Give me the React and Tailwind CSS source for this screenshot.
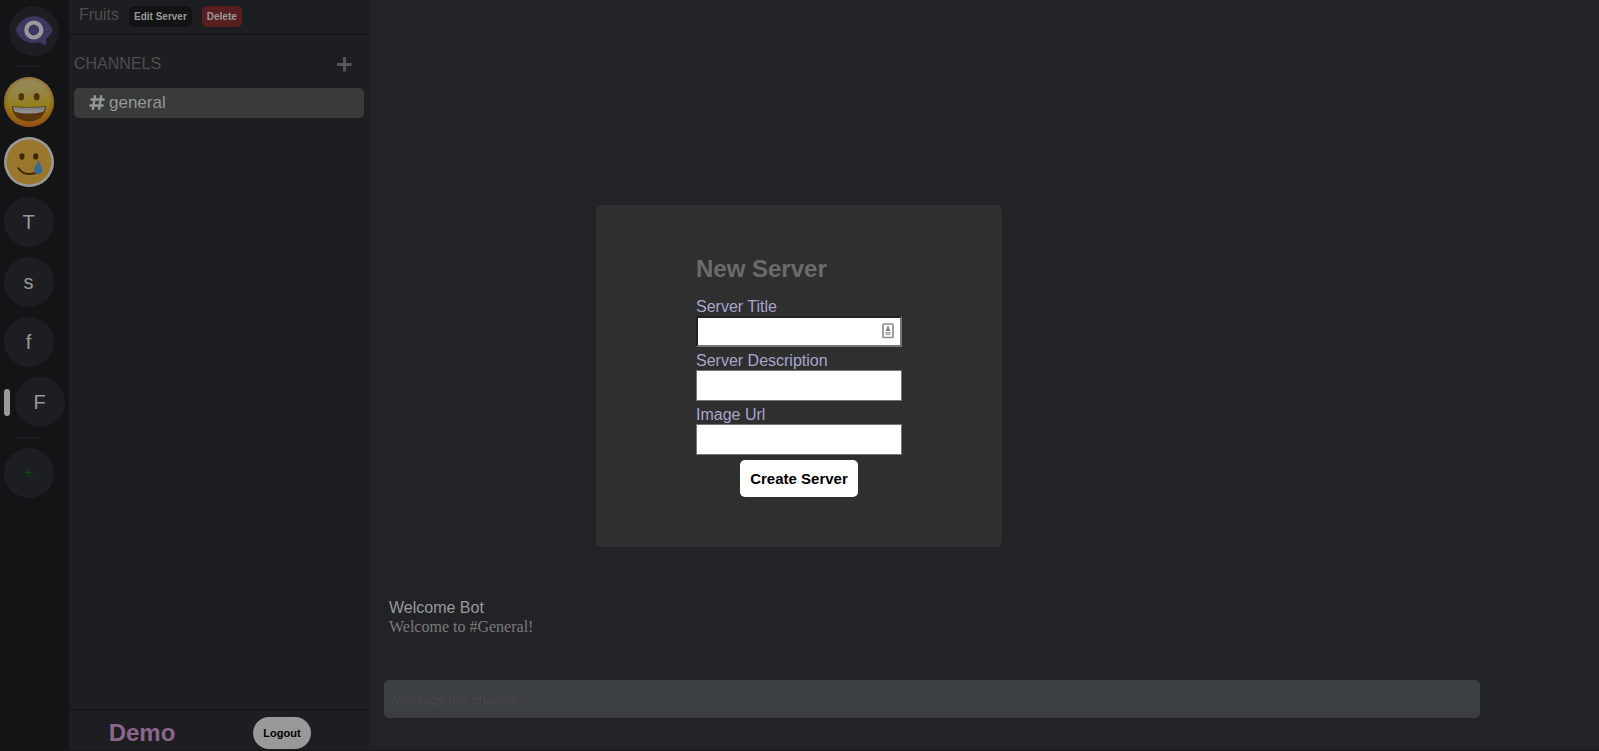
import React from "react";

const serverLink =
  "flex size-[50px] shrink-0 items-center justify-center rounded-full bg-[#1d1e21] pr-px text-xl leading-6 text-[#999999]";

function Divider() {
  return <div className="ml-3.5 h-px w-[30px] shrink-0 bg-[#1d1e21]" />;
}

function Logo() {
  return (
    <svg viewBox="0 0 50 50" className="size-full" aria-hidden="true">
      <path
        d="M6.700 24 C9.500 16 16 10.200 25 10.200 C34 10.200 40.500 16 43.800 24 C42.500 27.500 40 30.500 37 32.700 V39.500 L30.500 36.300 C20 38.800 9.500 33.500 6.700 24Z"
        fill="#3e3660"
      />
      <circle cx="24.800" cy="24" r="7.500" fill="none" stroke="#999999" strokeWidth="4.200" />
    </svg>
  );
}

function Grin() {
  return (
    <svg viewBox="0 0 50 50" className="size-full" aria-hidden="true">
      <defs>
        <linearGradient id="face" x1="0" y1="0" x2="0" y2="1">
          <stop offset="0" stopColor="#958a5c" />
          <stop offset="0.300" stopColor="#938647" />
          <stop offset="0.600" stopColor="#948018" />
          <stop offset="1" stopColor="#965a12" />
        </linearGradient>
        <radialGradient id="rim" cx="0.5" cy="0.47" r="0.53">
          <stop offset="0.740" stopColor="#945210" stopOpacity="0" />
          <stop offset="0.920" stopColor="#945210" stopOpacity="0.500" />
          <stop offset="1" stopColor="#914910" />
        </radialGradient>
        <linearGradient id="teeth" x1="0" y1="0" x2="0" y2="1">
          <stop offset="0" stopColor="#77797a" />
          <stop offset="1" stopColor="#989898" />
        </linearGradient>
      </defs>
      <circle cx="25" cy="25" r="25" fill="url(#face)" />
      <circle cx="25" cy="25" r="25" fill="url(#rim)" />
      <ellipse cx="17.300" cy="19.700" rx="2.900" ry="3.800" fill="#58320f" />
      <ellipse cx="32.700" cy="19.700" rx="2.900" ry="3.800" fill="#58320f" />
      <path d="M8 29 Q25 31 42 29 C42 38 35 44.500 25 44.500 C15 44.500 8 38 8 29Z" fill="#5b3510" />
      <path d="M9 29.700 Q25 31.500 41 29.700 Q41 33.500 38.500 35 Q25 38 11.500 35 Q9 33.500 9 29.700Z" fill="url(#teeth)" />
    </svg>
  );
}

function Tear() {
  return (
    <svg viewBox="0 0 50 50" className="size-full" aria-hidden="true">
      <circle cx="25" cy="25" r="25" fill="#999999" />
      <circle cx="25" cy="25" r="22.500" fill="#99782d" />
      <ellipse cx="18" cy="19.500" rx="2.500" ry="3.200" fill="#3d2a05" />
      <ellipse cx="31.700" cy="19.500" rx="2.500" ry="3.200" fill="#3d2a05" />
      <path d="M14.500 31.300 Q18 37 25 37 Q28.500 37 31.500 36" fill="none" stroke="#3d2a05" strokeWidth="2" strokeLinecap="round" />
      <path d="M34.300 22.500 C35.500 27 38.500 29.500 38.500 33 A4.200 4.200 0 0 1 30 33 C30 29.500 33.300 27 34.300 22.500Z" fill="#386c96" />
    </svg>
  );
}

function Plus() {
  return (
    <svg viewBox="0 0 18 18" className="size-[18px]" aria-hidden="true">
      <path d="M2 9.500H16.500M9.500 2V16.500" fill="none" stroke="currentColor" strokeWidth="2.900" />
    </svg>
  );
}

function Hash() {
  return (
    <svg viewBox="0 0 16 16" className="size-4" aria-hidden="true">
      <path
        d="M6 0.300 L3.800 14.700 M12.200 0.300 L10 14.700 M1.500 4.500 H15.500 M0.500 10.500 H14.500"
        fill="none"
        stroke="currentColor"
        strokeWidth="2.400"
      />
    </svg>
  );
}

function Rail() {
  return (
    <nav aria-label="Servers" className="flex w-[69px] shrink-0 flex-col gap-2.5 bg-[#131416] pt-1.5">
      <a href="#home" aria-label="Home" className="ml-[9px] block size-[50px] shrink-0 rounded-full bg-[#1d1e21]">
        <Logo />
      </a>
      <Divider />
      <a href="#grin" aria-label="Grin" className="ml-1 block size-[50px] shrink-0">
        <Grin />
      </a>
      <a href="#tear" aria-label="Tear" className="ml-1 block size-[50px] shrink-0">
        <Tear />
      </a>
      {["T", "s", "f"].map((name) => (
        <a key={name} href={"#" + name} className={serverLink + " ml-1"}>
          {name}
        </a>
      ))}
      <div className="ml-1 flex items-center gap-[5px]">
        <span className="h-[27px] w-1.5 rounded-full bg-[#999999]" />
        <a href="#F" aria-current="page" className={serverLink}>
          F
        </a>
      </div>
      <Divider />
      <button
        type="button"
        className="ml-1 flex size-[50px] shrink-0 items-center justify-center rounded-full bg-[#1d1e21] text-base leading-[18px] text-[#004d00]"
      >
        +
      </button>
    </nav>
  );
}

function Sidebar() {
  return (
    <aside className="flex w-[300px] shrink-0 flex-col bg-[#1d1e21]">
      <header className="flex h-[35px] items-start gap-2.5 border-b border-[#131416] pt-1.5 pl-2.5">
        <h1 className="text-base leading-[18px] text-[#4d4d4d]">Fruits</h1>
        <button type="button" className="h-[21px] rounded-[5px] bg-[#121314] px-[5px] text-[10px] font-bold leading-3 text-[#999999]">
          Edit Server
        </button>
        <button type="button" className="h-[21px] rounded-[5px] bg-[#571f1f] px-[5px] text-[10px] font-bold leading-3 text-[#999999]">
          Delete
        </button>
      </header>
      <div className="flex items-center justify-between pt-5 pr-4 pl-[5px]">
        <h2 className="text-base leading-[18px] text-[#4d4d4d]">CHANNELS</h2>
        <button type="button" aria-label="Add channel" className="text-[#575757]">
          <Plus />
        </button>
      </div>
      <a
        href="#general"
        className="mx-[5px] mt-[15px] flex h-[30px] items-center gap-1 rounded-[5px] bg-[#3a3a3a] pl-[15px] text-[17px] leading-5 text-[#929992]"
      >
        <Hash />
        general
      </a>
      <footer className="mt-auto grid h-[41px] grid-cols-2 items-center border-t border-[#131416] pt-[5px]">
        <div className="pr-1 text-center text-2xl font-bold leading-7 text-[#8b668b]">Demo</div>
        <div className="flex justify-center pr-6">
          <button type="button" className="h-8 rounded-full bg-[#999999] px-2.5 text-[11px] font-bold leading-3 text-black">
            Logout
          </button>
        </div>
      </footer>
    </aside>
  );
}

function Chat() {
  return (
    <main className="flex min-w-0 flex-1 flex-col justify-end bg-[#222327] pr-[119px] pb-8 pl-[15px]">
      <article className="mb-11 pl-[5px]">
        <h3 className="text-base leading-5 text-[#999999]">Welcome Bot</h3>
        <p className="font-['Liberation_Serif',serif] text-base leading-[18px] text-[#7a7a7a]">Welcome to #General!</p>
      </article>
      <input
        type="text"
        aria-label="Message this channel"
        placeholder="Message this channel"
        className="h-[38px] w-full rounded-[5px] bg-[#3b3e43] px-2 text-[13px] text-[#999999] placeholder:text-[#484848]"
      />
    </main>
  );
}

function Field({ id, label, children }) {
  return (
    <div className="flex flex-col">
      <label htmlFor={id} className="text-base leading-[18px] text-[#a6a6cc]">
        {label}
      </label>
      {children}
    </div>
  );
}

function NewServer() {
  return (
    <div className="fixed inset-0 flex items-center justify-center pr-px">
      <form
        role="dialog"
        aria-labelledby="new-server"
        className="flex flex-col rounded-[5px] bg-[#2f2f2f] px-[100px] py-[50px]"
      >
        <h2 id="new-server" className="mb-4 text-2xl font-bold leading-[27px] text-[#6b6b6b]">
          New Server
        </h2>
        <div className="flex flex-col gap-[5px]">
          <Field id="title" label="Server Title">
            <div className="relative">
              <input
                id="title"
                type="text"
                className="block h-[31px] w-[206px] border-2 border-t-[#212121] border-r-[#767676] border-b-[#767676] border-l-[#212121] bg-white px-2 text-base text-black outline-none"
              />
              <svg viewBox="0 0 12 16" className="pointer-events-none absolute top-[7px] right-2 h-4 w-3" aria-hidden="true">
                <rect x="1" y="1" width="10" height="13.500" rx="1" fill="#fff" stroke="#8f8f8f" strokeWidth="1.700" />
                <path d="M5.200 3h1.600v2.200L8 6.500V8H4V6.500l1.200-1.300Z" fill="#808080" />
                <path d="M3.500 9h5v3h-5Z" fill="#b0b0b0" />
              </svg>
            </div>
          </Field>
          <Field id="description" label="Server Description">
            <input id="description" type="text" className="h-[31px] w-[206px] border border-[#767676] bg-white px-2 text-base text-black" />
          </Field>
          <Field id="image" label="Image Url">
            <input id="image" type="text" className="h-[31px] w-[206px] border border-[#767676] bg-white px-2 text-base text-black" />
          </Field>
        </div>
        <button type="button" className="mt-[5px] self-center rounded-[5px] bg-white p-2.5 text-[15px] font-bold leading-[17px] text-black">
          Create Server
        </button>
      </form>
    </div>
  );
}

export default function App() {
  return (
    <div className="flex min-h-screen border-b border-[#1a1618] font-['Liberation_Sans',Arial,sans-serif]">
      <Rail />
      <Sidebar />
      <Chat />
      <NewServer />
    </div>
  );
}
